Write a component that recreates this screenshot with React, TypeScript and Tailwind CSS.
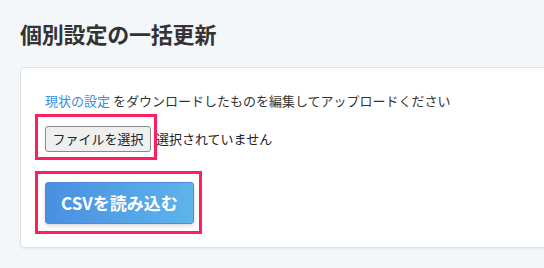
export default function App() {
  return (
    <div
      className="min-h-screen bg-[#f4f7fa] pl-5 pt-[18px] pb-6 text-[#333] overflow-hidden"
      style={{ fontFamily: '"Noto Sans CJK JP", "Noto Sans", sans-serif' }}
    >
      <h1 className="text-[22px] font-bold leading-[30px] tracking-[-0.2px]">個別設定の一括更新</h1>

      {/* Card */}
      <div className="mt-[19px] w-[560px] rounded border border-[#dfe3e8] bg-white pl-6 pt-[23px] pb-[23px] shadow-[0_1px_2px_rgba(0,0,0,0.06)]">
        <p className="text-[13px] leading-5">
          <a href="#" className="text-[#3a8ee0]">現状の設定</a> をダウンロードしたものを編集してアップロードください
        </p>

        <div className="mt-[15px] flex items-center gap-[5px] text-[13px]">
          <div className="relative">
            <button className="h-[26px] w-[106px] rounded-[3px] border border-[#8a8a8a] bg-[#efefef] text-[13px] text-[#222]">
              ファイルを選択
            </button>
            <span className="pointer-events-none absolute -left-[10px] -top-[12px] -right-[6px] -bottom-[8px] border-[3px] border-[#fe1f5c]" />
          </div>
          <span className="text-[#222]">選択されていません</span>
        </div>

        <div className="relative mt-[30px] w-[149px]">
          <button className="h-[42px] w-[149px] rounded-[3px] border border-[#4a8de0] bg-gradient-to-r from-[#4a8fe0] to-[#5db4eb] text-[17px] font-bold text-white shadow-[0_2px_4px_rgba(0,0,0,0.15)]">
            CSVを読み込む
          </button>
          <span className="pointer-events-none absolute -left-[10px] -top-[11px] -right-[8px] -bottom-[10px] border-[3px] border-[#fe1f5c]" />
        </div>
      </div>
    </div>
  );
}
